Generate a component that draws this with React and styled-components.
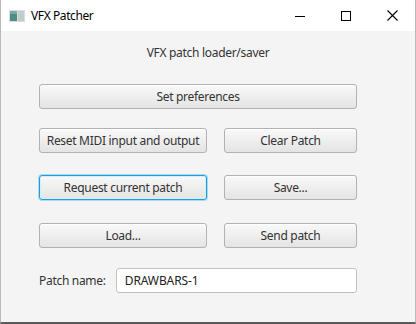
import React from "react";
import styled, { createGlobalStyle, css } from "styled-components";

const Global = createGlobalStyle`
  html, body { margin: 0; padding: 0; background: #ffffff; }
  body { font-family: "Noto Sans", "Open Sans", sans-serif; }
`;

const Window = styled.div`
  width: 416px;
  height: 324px;
  box-sizing: border-box;
  border-left: 1px solid #b9b9b9;
  border-right: 1px solid #b9b9b9;
  border-bottom: 2px solid #5a5a5a;
  display: flex;
  flex-direction: column;
  background: #f4f4f4;
  overflow: hidden;
`;

const TitleBar = styled.div`
  height: 31px;
  flex: none;
  background: #ffffff;
  display: flex;
  align-items: center;
  padding-left: 8px;
  font-size: 12px;
  color: #000;
`;

const AppIcon = styled.svg`
  width: 16px;
  height: 12px;
  margin-right: 6px;
  margin-top: 1px;
`;

const Title = styled.span`
  flex: 1;
  font-family: "Noto Sans", sans-serif;
  font-size: 12px;
  letter-spacing: -0.4px;
`;

const Controls = styled.div`
  display: flex;
  height: 31px;
`;

const Ctrl = styled.div`
  width: 46px;
  display: flex;
  align-items: center;
  justify-content: center;
`;

const Content = styled.div`
  flex: 1;
  display: flex;
  flex-direction: column;
  padding: 0 58px 0 38px;
  font-family: "Noto Sans", sans-serif;
  font-size: 12px;
  color: #333333;
`;

const Heading = styled.div`
  text-align: center;
  margin: 13px -58px 0 -38px;
  height: 18px;
  line-height: 18px;
  color: #333;
  letter-spacing: -0.3px;
`;

const Row = styled.div`
  display: grid;
  grid-template-columns: 168px 133px;
  column-gap: 17px;
  margin-top: ${(p) => p.$top}px;
`;

const Button = styled.div`
  height: 25px;
  box-sizing: border-box;
  border: 1px solid #b2b2b2;
  border-radius: 3px;
  background: linear-gradient(#f9f9f9, #e4e4e4);
  box-shadow: inset 0 1px 0 #ffffff;
  display: flex;
  align-items: center;
  justify-content: center;
  color: #333333;
  font-size: 12px;
  letter-spacing: -0.3px;
  white-space: nowrap;
  ${(p) => p.$wide && css`grid-column: 1 / span 2;`}
  ${(p) =>
    p.$focused &&
    css`
      border-color: #1e9fd6;
      box-shadow: inset 0 0 0 1px #d6eefa, 0 0 0 1px #a8daf2;
    `}
`;

const FieldRow = styled.div`
  display: flex;
  align-items: center;
  margin-top: 20px;
`;

const Label = styled.span`
  width: 77px;
  color: #333;
  letter-spacing: -0.3px;
`;

const Field = styled.div`
  width: 242px;
  height: 25px;
  box-sizing: border-box;
  border: 1px solid #c2c2c2;
  border-radius: 3px;
  background: #ffffff;
  display: flex;
  align-items: center;
  padding-left: 8px;
  color: #222;
  letter-spacing: -0.1px;
`;

export default function App() {
  return (
    <>
      <Global />
      <Window>
        <TitleBar>
          <AppIcon viewBox="0 0 16 12">
            <rect x="0" y="0" width="16" height="12" fill="#d9dedd" />
            <rect x="1" y="1" width="7" height="10" fill="#4f8c84" />
            <rect x="9" y="1" width="6" height="10" fill="#c2ccca" />
            <rect x="1" y="1" width="7" height="3" fill="#79aaa3" />
          </AppIcon>
          <Title>VFX Patcher</Title>
          <Controls>
            <Ctrl>
              <svg width="10" height="10" viewBox="0 0 10 10">
                <path d="M0 5.5H10" stroke="#000" strokeWidth="1" />
              </svg>
            </Ctrl>
            <Ctrl>
              <svg width="10" height="10" viewBox="0 0 10 10">
                <rect x="0.5" y="0.5" width="9" height="9" fill="none" stroke="#000" strokeWidth="1" />
              </svg>
            </Ctrl>
            <Ctrl>
              <svg width="11" height="11" viewBox="0 0 11 11">
                <path d="M0.5 0.5L10.5 10.5M10.5 0.5L0.5 10.5" stroke="#000" strokeWidth="1.1" />
              </svg>
            </Ctrl>
          </Controls>
        </TitleBar>
        <Content>
          <Heading>VFX patch loader/saver</Heading>
          <Row $top={22}>
            <Button $wide>Set preferences</Button>
          </Row>
          <Row $top={19}>
            <Button>Reset MIDI input and output</Button>
            <Button>Clear Patch</Button>
          </Row>
          <Row $top={22}>
            <Button $focused>Request current patch</Button>
            <Button>Save...</Button>
          </Row>
          <Row $top={23}>
            <Button>Load...</Button>
            <Button>Send patch</Button>
          </Row>
          <FieldRow>
            <Label>Patch name:</Label>
            <Field>DRAWBARS-1</Field>
          </FieldRow>
        </Content>
      </Window>
    </>
  );
}
